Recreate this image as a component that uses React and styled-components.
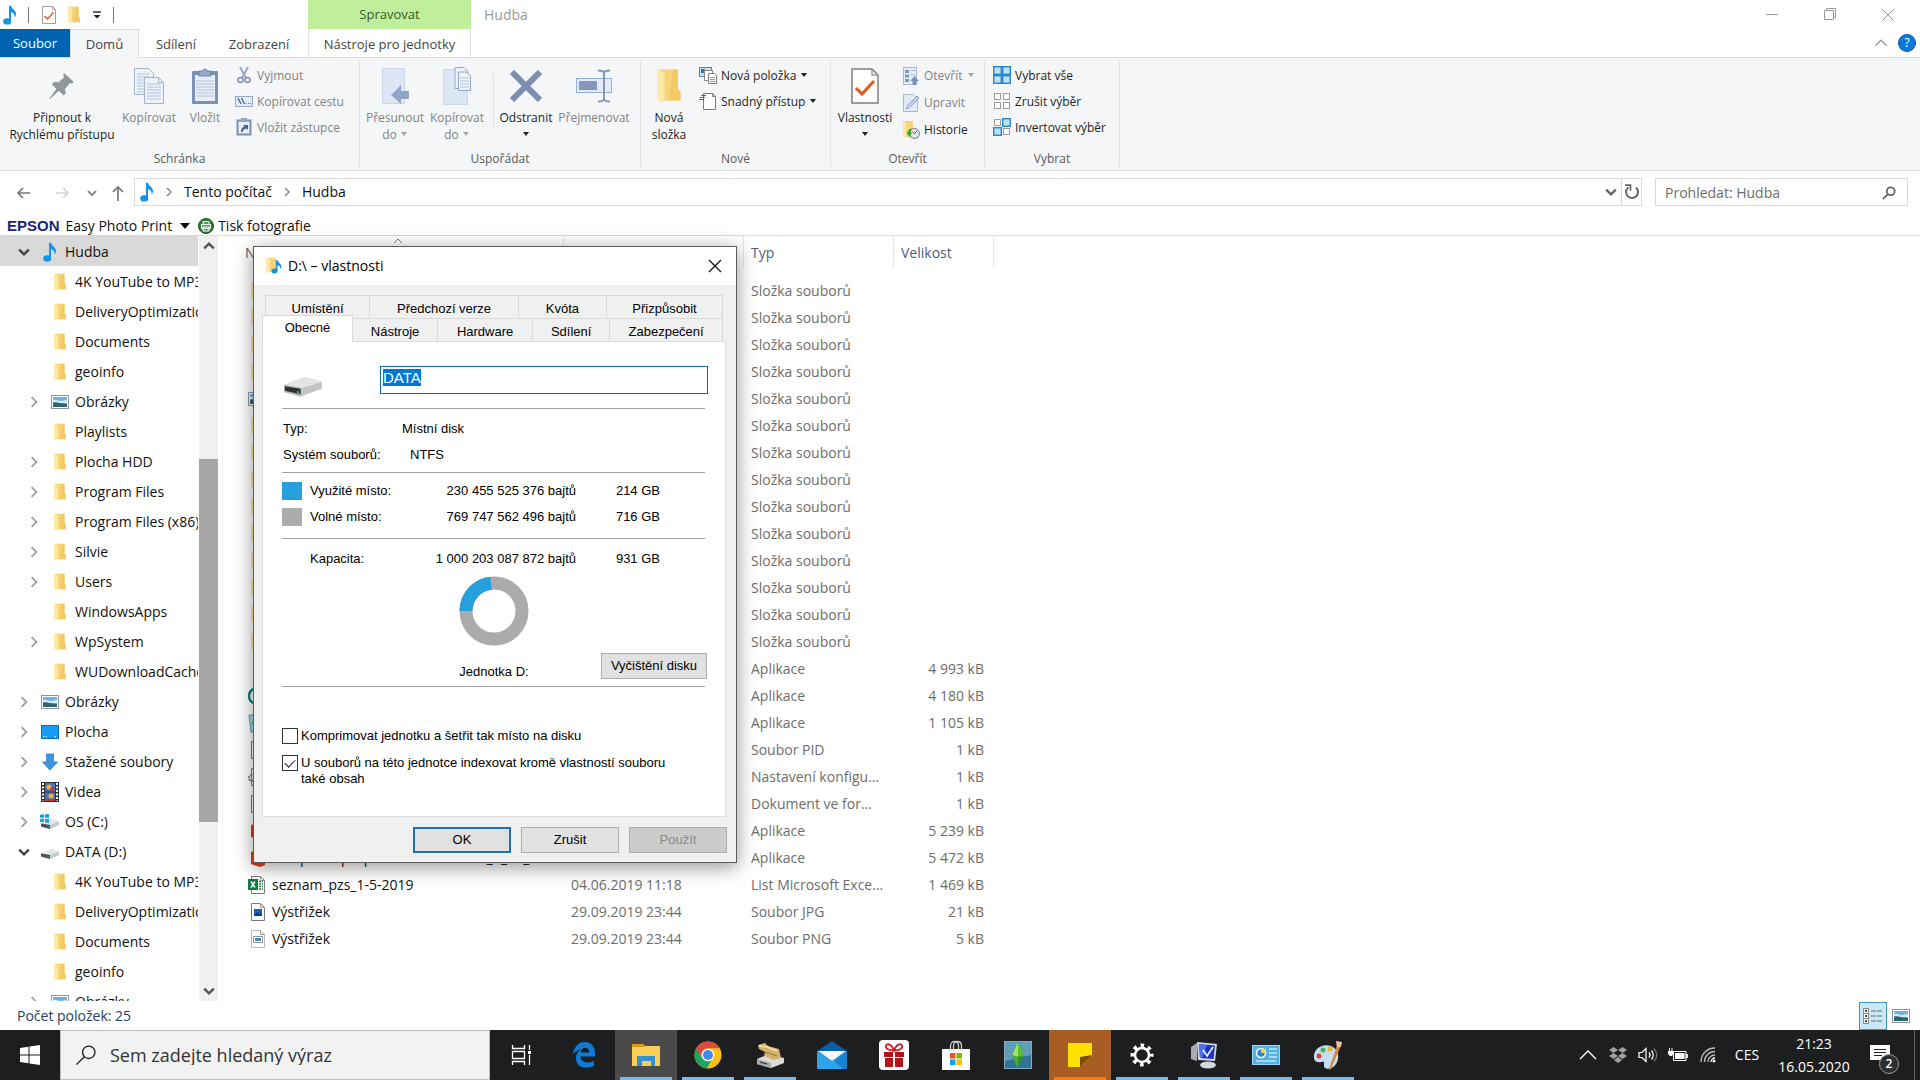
import React, { useEffect, useRef } from "react";
import styled, { createGlobalStyle, css } from "styled-components";

const Global = createGlobalStyle`
  * { box-sizing: border-box; }
  body { margin: 0; background: #fff; }
  button, input { font: inherit; color: inherit; margin: 0; }
  svg { display: block; flex: none; }
`;

const Screen = styled.div`
  height: 100vh;
  min-height: 640px;
  display: flex;
  flex-direction: column;
  overflow: hidden;
  position: relative;
  font-family: "Open Sans", "Noto Sans", sans-serif;
  font-size: 14px;
  line-height: 20px;
  color: #111;
`;

const bare = css`
  border: 0;
  background: none;
  padding: 0;
`;

/* ---------- icons ---------- */

const Svg = ({ w = 18, h = w, vb, children }) => (
  <svg width={w} height={h} viewBox={vb || `0 0 ${w} ${h}`} fill="none" aria-hidden="true">
    {children}
  </svg>
);

const Note = () => (
  <Svg w={14} h={20}>
    <ellipse cx="4.2" cy="16.4" rx="4" ry="3.2" fill="#1194ec" />
    <path d="M6 16V0.8h2c.4 3 5 4.400 5 8 0 1.500-.6 3-1.400 3.700.4-3-1.300-4.700-3.600-5.400V16z" fill="#1194ec" />
  </Svg>
);

const Folder = ({ w = 14, h = 18 }) => (
  <Svg w={w} h={h} vb="0 0 14 18">
    <path d="M1 .8h10.500v10l1.200.8v4.600H3z" fill="#f6d477" />
    <path d="M9 .8h2.500v10l1.200.8v4.600H7z" fill="#f2c962" />
    <path d="M1 .8l3.800 1.400v14.400l-1.200.8L1 15.800z" fill="#ffe9a6" />
  </Svg>
);

const Picture = () => (
  <Svg w={18} h={14}>
    <rect x=".5" y=".5" width="17" height="13" fill="#fff" stroke="#8f979d" />
    <rect x="2" y="2" width="14" height="10" fill="#6fb0e4" />
    <path d="M2 5c3-1 5 1 8 1s4-1 6-.5V8H2z" fill="#d9edf7" />
    <path d="M2 7.500c4-1 6 .8 14 1.500v3H2z" fill="#2f6473" />
  </Svg>
);

const Desktop = () => (
  <Svg w={18} h={14}>
    <rect x=".5" y=".5" width="17" height="13" fill="#149bf5" stroke="#0b6fb8" />
    <path d="M2 11.800h1.500M5 11.800h1M13.500 11.800H15" stroke="#fff" />
  </Svg>
);

const Download = () => (
  <Svg w={16} h={18}>
    <path d="M4.500 1h7v8H15.500L8 17 .5 9h4z" fill="#3c96e0" stroke="#2a7bc4" strokeWidth=".8" />
  </Svg>
);

const Film = () => (
  <Svg w={18} h={20}>
    <rect width="18" height="20" fill="#30323a" />
    <rect x="4" y="1" width="10" height="8.500" fill="#4b6fc2" />
    <rect x="4" y="10.500" width="10" height="8.500" fill="#4b6fc2" />
    <circle cx="8" cy="5" r="2.500" fill="#e8b92c" />
    <circle cx="11" cy="7" r="2" fill="#c83a2c" />
    <circle cx="10" cy="14" r="2.500" fill="#e8b92c" />
    <path d="M4 17h10v2H4z" fill="#c83a2c" />
    <path d="M2 1v18M16 1v18" stroke="#fff" strokeWidth="2" strokeDasharray="2 1.500" />
  </Svg>
);

const Drive = ({ os, w = 20, h = 16 }) => (
  <Svg w={w} h={h} vb="0 0 20 16">
    <path d="M1 9.500L12 5l7 2.500V11l-9 4-9-2.500z" fill="#c5c7c9" />
    <path d="M1 9.500L12 5l7 2.500L10 11z" fill="#e6e7e8" />
    <path d="M1 9.500l9 1.500v4l-9-2.500z" fill="#4b4e50" />
    <path d="M7.500 12.200l1.300.3v1l-1.300-.3z" fill="#3ad05a" />
    {os && <path d="M0 .8l4-.5v3.500H0zM5 .2L9 0v3.800H5zM0 4.800h4v3.500l-4-.5zM5 4.800h4V9l-4-.5z" fill="#15a6df" />}
  </Svg>
);

const BigDrive = () => (
  <Svg w={40} h={22}>
    <path d="M1 9L22 1l17 5v6.500L18 20.500 1 16z" fill="#c3c4c6" />
    <path d="M1 9L22 1l17 5-20 6z" fill="#e4e4e6" />
    <path d="M1 9l18 3-1 8.500L1 16z" fill="#b4b5b7" />
    <path d="M2 10.200l15.500 2.600v5.500L2 14.800z" fill="#2e3133" />
    <path d="M14 15l2 .4v2l-2-.4z" fill="#35d04c" />
  </Svg>
);

const Chevron = ({ dir = "right", size = 10, color = "#8a8a8a", sw = 2 }) => (
  <Svg w={size} h={size} vb="0 0 10 10">
    <path
      d={{ right: "M3 1l4 4-4 4", down: "M1 3l4 4 4-4", up: "M1 7l4-4 4 4" }[dir]}
      stroke={color}
      strokeWidth={sw}
    />
  </Svg>
);

const Caret = ({ color = "#222" }) => (
  <Svg w={8} h={5}>
    <path d="M1 0h6L4 4z" fill={color} />
  </Svg>
);

const CheckDoc = ({ w = 14, h = 18 }) => (
  <Svg w={w} h={h} vb="0 0 28 36">
    <path d="M1 1h20l6 6v28H1z" fill="#fff" stroke="#7f7f7f" strokeWidth="1.500" />
    <path d="M21 1v6h6" stroke="#9a9a9a" strokeWidth="1.500" />
    <path d="M5 20l6 6L23 13" stroke="#e35a1c" strokeWidth="3" />
  </Svg>
);

const Pin = () => (
  <Svg w={26} h={28}>
    <path d="M15 1l10 9-2.500 1.500-1.500-.5-5 6 .8 4-2 2.500-5-4.800L1 27l-.6-.6 7-9.700-4.400-4.200L5 10l4.500.3L15 5.500 14.200 3z" fill="#8e979c" />
  </Svg>
);

const docLines = (x, y, n, w) =>
  Array.from({ length: n }, (_, i) => <path key={i} d={`M${x} ${y + i * 3}h${w}`} stroke="#b3c2da" />);

const CopyBig = () => (
  <Svg w={30} h={36}>
    <path d="M.5.5h14l5 5v21H.5z" fill="#eef3fa" stroke="#a3b4cf" />
    {docLines(3, 6, 7, 12)}
    <path d="M10.500 9.500h14l5 5v21h-19z" fill="#eef3fa" stroke="#a3b4cf" />
    <path d="M24.500 9.500v5h5" stroke="#a3b4cf" />
    {docLines(13, 16, 6, 14)}
  </Svg>
);

const PasteBig = () => (
  <Svg w={28} h={38}>
    <rect x="1" y="4" width="26" height="33" rx="1" fill="#7d90b5" />
    <rect x="4" y="8" width="20" height="26" fill="#e8eef8" />
    {docLines(5, 14, 6, 18)}
    <path d="M8 4h4a2 2 0 014 0h4v5H8z" fill="#96a7c8" stroke="#6f83aa" />
  </Svg>
);

const Scissors = () => (
  <Svg>
    <path d="M5 1l6 11M13 1L7 12" stroke="#9aabc8" strokeWidth="2" />
    <circle cx="5.500" cy="14" r="2.500" stroke="#7d90b5" strokeWidth="1.600" />
    <circle cx="12.500" cy="14" r="2.500" stroke="#7d90b5" strokeWidth="1.600" />
  </Svg>
);

const PathIcon = () => (
  <Svg>
    <rect x=".5" y="4.500" width="17" height="10" fill="#e3ebf7" stroke="#9aabc8" />
    <path d="M3 6l3 6M6.500 6l3 6" stroke="#4d628e" strokeWidth="1.300" />
    <path d="M10.500 11.500h1M13 11.500h1M15.200 11.500h1" stroke="#4d628e" />
  </Svg>
);

const ShortcutIcon = () => (
  <Svg>
    <path d="M2.500 2.500h13v14h-13z" fill="#e8eef8" stroke="#7d90b5" strokeWidth="2" />
    <path d="M6 0h6v4H6z" fill="#96a7c8" />
    <path d="M6 14c0-4 2-5 3.500-5.500L8 7h5v5l-1.500-1.500C9 11 8 12 7.500 14z" fill="#4d628e" />
  </Svg>
);

const MoveBig = () => (
  <Svg w={32} h={36}>
    <path d="M3.500.5h22v35h-22z" fill="#dce6f4" stroke="#c9d7eb" />
    <path d="M30 23v8h-8v5l-10-9 10-10v6z" fill="#93a5c6" />
  </Svg>
);

const CopyToBig = () => (
  <Svg w={34} h={38}>
    <path d="M3.500 2.500h24v35h-24z" fill="#dce6f4" stroke="#c9d7eb" />
    <path d="M15 .5h9l4 4v17H15z" fill="#eef3fa" stroke="#94a6c6" />
    <path d="M18.500 5h8l4 4v14.500h-12z" fill="#eef3fa" stroke="#94a6c6" />
    {docLines(20, 11, 4, 9)}
  </Svg>
);

const DeleteBig = () => (
  <Svg w={32} h={32}>
    <path d="M2 2l28 28M30 2L2 30" stroke="#7d8fb0" strokeWidth="6" />
  </Svg>
);

const RenameBig = () => (
  <Svg w={36} h={34}>
    <rect x=".5" y="9.500" width="35" height="14" fill="#e3ebf7" stroke="#8fb0dc" />
    <rect x="3" y="12" width="18" height="9" fill="#8497bb" />
    <path d="M22 1.500c3 0 5 .5 6 2 1-1.500 3-2 6-2M28 3v28M22 32.500c3 0 5-.5 6-2 1 1.500 3 2 6 2" stroke="#8497bb" strokeWidth="2" />
  </Svg>
);

const NewItem = () => (
  <Svg>
    <rect x=".5" y="1.500" width="12" height="9" fill="#c7e2f2" stroke="#4a87ad" />
    <rect x="2" y="3" width="4" height="4" fill="#35789c" />
    <rect x="5.500" y="4.500" width="8" height="10" fill="#fff" stroke="#8a8a8a" />
    <path d="M9.500 7.500h6l2 2v8h-8z" fill="#fff" stroke="#7c7c7c" />
    <path d="M11 11.500h5M11 13.500h5M11 15.500h5" stroke="#a58ec0" />
  </Svg>
);

const EasyAccess = () => (
  <Svg>
    <path d="M4.500 1.500h9l3 3v13h-12z" fill="#fff" stroke="#7c7c7c" />
    <path d="M13.500 1.500v3h3" stroke="#7c7c7c" />
    <path d="M2 3.500h5M1 5.500h5M0 7.500h5" stroke="#1e7aa8" />
  </Svg>
);

const OpenIcon = () => (
  <Svg>
    <rect x="1.500" y=".5" width="13" height="17" fill="#e8eef8" stroke="#a9b9d4" />
    <path d="M3 3h4v3H3zM3 7.500h4v3H3zM3 12h4v3H3z" fill="#8497bb" />
    <path d="M8.500 3.500h5M8.500 8h5" stroke="#a9b9d4" />
    <path d="M12.500 9l4.500 5h-2.500v4h-4v-4H8z" fill="#7d90b5" />
  </Svg>
);

const EditIcon = () => (
  <Svg>
    <path d="M1.500.5h10l4 4v13h-14z" fill="#e3ebf7" stroke="#a9b9d4" />
    <path d="M4 15l1.500-3.500L15 2l2 2-9.500 9.500z" fill="#c2d2ea" stroke="#8fa3c6" />
  </Svg>
);

const HistoryIcon = () => (
  <Svg>
    <path d="M1 0h10v16H3z" fill="#f6d477" />
    <path d="M1 0l3 1v16l-3-1z" fill="#ffe9a6" />
    <circle cx="12.500" cy="12.500" r="5" fill="#dfe3e0" stroke="#777" />
    <path d="M12.500 12.500l2.500-2.500M10.500 11l2 1.500" stroke="#555" />
    <path d="M10 7.500c-3 0-4 2-4 4H4.500L7.500 16l2.500-4.500H8.500c0-1.500.5-3 1.500-4z" fill="#2fa53a" />
  </Svg>
);

const squares = [[1, 1], [10, 1], [1, 10], [10, 10]];
const GridIcon = ({ on }) => (
  <Svg>
    {squares.map(([x, y], i) =>
      on[i] ? (
        <rect key={i} x={x - 0.3} y={y - 0.3} width="7.600" height="7.600" fill="#b9e1f8" stroke="#2a86cc" strokeWidth="1.400" />
      ) : (
        <rect key={i} x={x + 0.5} y={y + 0.5} width="6" height="6" fill="#fff" stroke="#9d9d9d" />
      )
    )}
  </Svg>
);

const Arrow = ({ dir, color = "#777" }) => (
  <Svg w={18} h={18}>
    <path d={{ left: "M15 9H3M8 4L3 9l5 5", right: "M3 9h12M10 4l5 5-5 5", up: "M9 17V3M4 8l5-5 5 5" }[dir]} stroke={color} strokeWidth="1.700" />
  </Svg>
);

const Refresh = () => (
  <Svg w={16} h={16}>
    <path d="M4.500 3.200A6 6 0 1012 3.500" stroke="#666" strokeWidth="2" />
    <path d="M1 1.200h5.500v5.500" stroke="#666" strokeWidth="1.700" />
  </Svg>
);

const Magnifier = ({ w = 16, color = "#666", sw = 2 }) => (
  <Svg w={w} h={w} vb="0 0 16 16">
    <circle cx="10" cy="6" r="4.500" stroke={color} strokeWidth={sw} />
    <path d="M6.800 9.200L1 15" stroke={color} strokeWidth={sw} />
  </Svg>
);

const PrintBadge = () => (
  <Svg w={16} h={16}>
    <circle cx="8" cy="8" r="7.500" fill="#2c7d33" stroke="#1b5521" />
    <path d="M5 3.500h6v3H5zM3.500 6.500h9v4h-9zM5 9h6v4H5z" fill="#49a450" stroke="#fff" />
  </Svg>
);

const Sheet = ({ kind }) => (
  <Svg w={18} h={20}>
    <path d="M3.500 1.500h9l4 4v13h-13z" fill="#fff" stroke={kind === "png" ? "#b9b9b9" : "#7b7b7b"} />
    <path d="M12.500 1.500v4h4" stroke="#9a9a9a" />
    {kind === "jpg" && <path d="M6 7h8v7H6z" fill="#1d62b4" />}
    {kind === "jpg" && <path d="M6 14l3-4 2 2 1.500-1L14 14z" fill="#0d3a78" />}
    {kind === "png" && <rect x="5.500" y="7.500" width="9" height="6" fill="#fff" stroke="#8f979d" />}
    {kind === "png" && <path d="M7 9h6v3H7z" fill="#4e86a8" />}
    {kind === "xls" && <path d="M11 6.500h4M11 9h4M11 11.500h4M11 14h4" stroke="#24834b" strokeWidth="1.500" strokeDasharray="2 .8" />}
    {kind === "xls" && <rect y="4" width="10" height="11" fill="#167a42" />}
    {kind === "xls" && <path d="M3 6.500l4 6M7 6.500l-4 6" stroke="#fff" strokeWidth="1.500" />}
    {kind === "ini" && <circle cx="4" cy="11" r="3" stroke="#6d7780" strokeWidth="2" strokeDasharray="2 1" />}
  </Svg>
);

const AppIcon = ({ kind }) => (
  <Svg w={18} h={20}>
    {kind === "ring" && <circle cx="9" cy="10" r="8" stroke="#128080" strokeWidth="2.500" />}
    {kind === "bin" && <path d="M1 2h16l-2 17H3z" fill="#a9d4ee" stroke="#5a9cc4" />}
    {kind === "bin" && <path d="M4 9l5-2 3 6-6 4z" fill="#2aa43a" />}
    {kind === "office" && <path d="M3 4l9-3 5 2v14l-5 2-9-3z" fill="#d8401c" />}
    {kind === "plain" && <path d="M8 4l2 12-4 2 2-6-2-2z" fill="#777" />}
  </Svg>
);

const FolderMusic = () => (
  <Svg w={18} h={18}>
    <path d="M1 1h10v14H3z" fill="#f6d477" />
    <path d="M1 1l4 1.500v14L1 15z" fill="#ffe9a6" />
    <ellipse cx="9.500" cy="14" rx="3" ry="2.500" fill="#1b8ddd" />
    <path d="M10.800 14V3h1.500c.5 3 4.200 3.500 4.200 7l-1 2c0-2.500-1.500-3.500-3-4v6z" fill="#1b8ddd" />
  </Svg>
);

/* ---------- title bar and tabs ---------- */

const TitleBar = styled.header`
  display: flex;
  height: 29px;
  flex: none;
`;
const QuickAccess = styled.div`
  width: 308px;
  display: flex;
  align-items: center;
  gap: 11px;
  padding-left: 3px;
`;
const QuickButton = styled.button`
  ${bare}
`;
const QuickSep = styled.span`
  width: 1px;
  height: 16px;
  margin-right: 2px;
  background: #777;
`;
const ContextTitle = styled.div`
  width: 163px;
  background: #bfef9b;
  color: #3c5a2a;
  text-align: center;
  font-size: 13px;
  line-height: 28px;
`;
const WindowTitle = styled.h1`
  flex: 1;
  margin: 0;
  padding-left: 13px;
  font-size: 14px;
  font-weight: 400;
  line-height: 29px;
  color: #9a9a9a;
`;
const Controls = styled.div`
  display: flex;
  padding-right: 3px;
`;
const Control = styled.button`
  ${bare}
  width: 58px;
  display: grid;
  place-items: center;
`;

const TabRow = styled.nav`
  display: flex;
  height: 29px;
  flex: none;
  border-bottom: 1px solid #dadbdc;
`;
const Tab = styled.button`
  ${bare}
  height: 29px;
  width: ${(p) => p.$w}px;
  font-size: 13px;
  color: #444;
  ${(p) => p.$kind === "file" && css`background: #0063b1; color: #fff; height: 28px;`}
  ${(p) => p.$kind === "active" && css`background: #f5f6f7; border: 1px solid #dadbdc; border-bottom: 0;`}
  ${(p) => p.$kind === "context" && css`margin-left: 3px; border: 1px solid #e2e2e2; border-width: 0 1px;`}
`;
const TabTail = styled.div`
  flex: 1;
  display: flex;
  justify-content: flex-end;
  align-items: center;
  gap: 10px;
  padding-right: 4px;
`;
const Help = styled.button`
  ${bare}
  width: 18px;
  height: 18px;
  border-radius: 50%;
  background: #0a78d6;
  border: 1px solid #0a5ca8;
  color: #fff;
  font-size: 12px;
  line-height: 16px;
`;

/* ---------- ribbon ---------- */

const Ribbon = styled.div`
  display: flex;
  height: 113px;
  flex: none;
  padding: 2px 0 3px;
  background: #f5f6f7;
  border-bottom: 1px solid #dadbdc;
  font-size: 12px;
  line-height: 17px;
`;
const Group = styled.section`
  width: ${(p) => p.$w}px;
  border-right: 1px solid #e2e3e4;
  display: flex;
  flex-direction: column;
`;
const GroupBody = styled.div`
  flex: 1;
  display: flex;
  padding-left: ${(p) => p.$pad || 4}px;
`;
const GroupLabel = styled.div`
  text-align: center;
  color: #5a5a5a;
  line-height: 16px;
`;
const Big = styled.button`
  ${bare}
  width: ${(p) => p.$w}px;
  display: flex;
  flex-direction: column;
  align-items: center;
  padding-top: 7px;
  white-space: nowrap;
  color: ${(p) => (p.disabled ? "#838383" : "#1e1e1e")};
`;
const BigIcon = styled.span`
  height: 42px;
  display: grid;
  place-items: center;
  padding-bottom: 4px;
`;
const Line = styled.span`
  display: flex;
  align-items: center;
  gap: 3px;
  height: 17px;
`;
const SmallList = styled.div`
  display: flex;
  flex-direction: column;
  align-items: flex-start;
  padding: 2px 0 0 ${(p) => p.$pad}px;
`;
const Small = styled.button`
  ${bare}
  height: ${(p) => p.$h || 26}px;
  display: flex;
  align-items: center;
  gap: 4px;
  white-space: nowrap;
  color: ${(p) => (p.disabled ? "#838383" : "#1e1e1e")};
`;
const InnerSep = styled.span`
  width: 1px;
  height: 56px;
  margin: 14px 2px 0 5px;
  background: #e2e3e4;
`;

const BigButton = ({ w, icon, lines, caret, disabled }) => (
  <Big $w={w} disabled={disabled}>
    <BigIcon>{icon}</BigIcon>
    {lines.map((t, i) => (
      <Line key={i}>
        {t}
        {caret && i === lines.length - 1 && <Caret color={disabled ? "#a5a5a5" : "#222"} />}
      </Line>
    ))}
  </Big>
);
const SmallButton = ({ icon, text, caret, disabled, h }) => (
  <Small disabled={disabled} $h={h}>
    {icon}
    {text}
    {caret && <Caret color={disabled ? "#a5a5a5" : "#222"} />}
  </Small>
);

/* ---------- address and Epson bars ---------- */

const AddressRow = styled.div`
  display: flex;
  flex: none;
  padding: 7px 12px 0 0;
`;
const NavButtons = styled.div`
  width: 134px;
  display: flex;
  align-items: center;
  padding: 2px 0 0 15px;
`;
const NavButton = styled.button`
  ${bare}
  width: ${(p) => p.$w}px;
`;
const AddressBox = styled.div`
  flex: 1;
  height: 28px;
  display: flex;
  align-items: center;
  gap: 10px;
  border: 1px solid #d9d9d9;
  padding-left: 5px;
`;
const Crumb = styled.a`
  color: inherit;
  text-decoration: none;
`;
const AddressTail = styled.div`
  margin-left: auto;
  display: flex;
  align-items: center;
  align-self: stretch;
`;
const AddressButton = styled.button`
  ${bare}
  width: 20px;
  height: 26px;
  display: grid;
  place-items: center;
  border-left: ${(p) => (p.$line ? "1px solid #d9d9d9" : "0")};
`;
const SearchBox = styled.label`
  width: 253px;
  height: 28px;
  margin-left: 13px;
  padding: 1px 11px 0 9px;
  display: flex;
  align-items: center;
  border: 1px solid #d9d9d9;
`;
const SearchInput = styled.input`
  ${bare}
  flex: 1;
  min-width: 0;
  outline: 0;
  &::placeholder { color: ${(p) => p.$ink || "#6d6d6d"}; opacity: 1; }
`;
const EpsonBar = styled.div`
  display: flex;
  align-items: center;
  height: 30px;
  flex: none;
  padding: 11px 0 0 7px;
  border-bottom: 1px solid #dadada;
`;
const EpsonMark = styled.b`
  font-family: "Liberation Sans", Arial, sans-serif;
  font-size: 15px;
  color: #1a237e;
  margin-right: 6px;
`;
const BarButton = styled.button`
  ${bare}
  display: flex;
  align-items: center;
  gap: ${(p) => p.$gap}px;
  margin-right: 8px;
`;

/* ---------- panes ---------- */

const Panes = styled.main`
  flex: 1;
  min-height: 0;
  display: flex;
`;
const TreeList = styled.ul`
  width: 198px;
  margin: 0;
  padding: 0;
  list-style: none;
  overflow: hidden;
`;
const TreeItem = styled.li`
  height: 30px;
  display: flex;
  align-items: center;
  padding: 1px 0 0 ${(p) => 18 + p.$level * 10}px;
  background: ${(p) => (p.$selected ? "#d9d9d9" : "transparent")};
  white-space: nowrap;
`;
const Slot = styled.span`
  width: ${(p) => p.$w}px;
  height: 20px;
  flex: none;
  display: flex;
  align-items: center;
  justify-content: ${(p) => p.$justify || "flex-start"};
`;
const ScrollBar = styled.div`
  width: 20px;
  margin-left: 1px;
  background: #f0f0f0;
  display: flex;
  flex-direction: column;
  border-right: 1px solid #fff;
`;
const ScrollButton = styled.button`
  ${bare}
  height: 20px;
  flex: none;
  display: grid;
  place-items: center;
`;
const Track = styled.div`
  flex: 1;
  display: flex;
  flex-direction: column;
`;
const Thumb = styled.div`
  flex: 0 0 50%;
  background: #a6a6a6;
`;
const TrackGap = styled.div`
  flex: 0 0 28%;
`;
const FilePane = styled.div`
  flex: 1;
  min-width: 0;
  margin-left: 3px;
  border-left: 1px solid #f3f3f3;
  overflow: hidden;
`;
const Files = styled.table`
  table-layout: fixed;
  width: 771px;
  border-collapse: collapse;
  color: #6d6d6d;
`;
const Th = styled.th`
  height: 41px;
  padding: 0;
  vertical-align: top;
  text-align: left;
  font-weight: 400;
  width: ${(p) => p.$w}px;
`;
const HeadCell = styled.div`
  position: relative;
  height: 32px;
  border-right: 1px solid #e5e5e5;
  padding-left: ${(p) => p.$pad || 7}px;
  line-height: 34px;
  color: #4c607a;
`;
const SortMark = styled.span`
  position: absolute;
  top: 0;
  left: 50%;
`;
const Td = styled.td`
  height: 27px;
  padding: 0 10px 0 7px;
  white-space: nowrap;
  overflow: hidden;
  text-overflow: ellipsis;
  text-align: ${(p) => (p.$right ? "right" : "left")};
`;
const NameCell = styled.div`
  display: flex;
  align-items: center;
  gap: 6px;
  padding-left: 18px;
  color: #111;
`;
const StatusBar = styled.footer`
  height: 29px;
  flex: none;
  display: flex;
  justify-content: space-between;
  padding: 0 10px 0 17px;
  line-height: 30px;
  color: #26405f;
`;
const Views = styled.div`
  display: flex;
  align-items: center;
  gap: 5px;
`;
const ViewButton = styled.button`
  ${bare}
  height: 28px;
  display: grid;
  place-items: center;
  ${(p) => p.$on && css`width: 28px; background: #cbe8f6; border: 1px solid #3c97bd;`}
`;

/* ---------- properties dialog ---------- */

const Dialog = styled.form`
  position: absolute;
  left: 253px;
  top: 246px;
  width: 484px;
  border: 1px solid #5c5c5c;
  background: #f0f0f0;
  box-shadow: 0 4px 18px rgba(0, 0, 0, 0.42);
  font-family: "Liberation Sans", Arial, sans-serif;
  font-size: 13px;
  line-height: 16px;
  color: #000;
`;
const DialogTitle = styled.div`
  height: 38px;
  background: #fff;
  display: flex;
  align-items: center;
  gap: 5px;
  padding: 0 14px 1px 11px;
  font-family: "Open Sans", "Noto Sans", sans-serif;
  font-size: 14px;
`;
const DialogClose = styled.button`
  ${bare}
  margin-left: auto;
`;
const DialogTabs = styled.div`
  padding: ${(p) => (p.$back ? "10px 13px 0 11px" : "0 13px 0 8px")};
  height: ${(p) => (p.$back ? 33 : 23)}px;
  display: flex;
  align-items: flex-end;
`;
const DialogTab = styled.button`
  ${bare}
  flex: ${(p) => p.$w} 1 0;
  height: 23px;
  padding-top: 3px;
  border: 1px solid #d9d9d9;
  border-width: 1px 1px 0 0;
  &:first-child { border-left-width: 1px; }
  ${(p) => p.$on && css`
    height: 27px;
    padding: 0 0 2px;
    margin-bottom: -1px;
    background: #fff;
    position: relative;
  `}
`;
const Panel = styled.div`
  margin: 0 10px 0 8px;
  height: 476px;
  padding: 24px 17px 0 19px;
  border: 1px solid #dcdcdc;
  background: #fff;
`;
const Rule = styled.hr`
  margin: 0 3px 0 0;
  border: 0;
  height: 1px;
  background: #a0a0a0;
`;
const VolumeRow = styled.div`
  display: flex;
  justify-content: space-between;
  align-items: flex-start;
  height: 42px;
`;
const DriveBox = styled.span`
  padding: 10px 0 0 1px;
`;
const VolumeInput = styled.input`
  width: 328px;
  height: 28px;
  padding: 0 2px 6px;
  border: 1px solid #0f6ab4;
  outline: 0;
  background: #fff;
  font-size: 15px;
  &::selection { background: #0078d7; color: #fff; }
`;
const Facts = styled.dl`
  margin: 0;
  padding: ${(p) => p.$pad};
  display: flex;
  flex-direction: column;
  gap: 10px;
`;
const Fact = styled.div`
  display: flex;
  align-items: center;
  height: 16px;
`;
const Term = styled.dt`
  width: ${(p) => p.$w}px;
`;
const Value = styled.dd`
  margin: 0;
  width: ${(p) => (p.$w ? p.$w + "px" : "auto")};
  text-align: ${(p) => (p.$right ? "right" : "left")};
`;
const Swatch = styled.span`
  width: 20px;
  height: 18px;
  margin-right: 8px;
  background: ${(p) => p.$c};
`;
const ChartArea = styled.div`
  display: grid;
  grid-template-columns: 158px 108px 1fr;
  height: 119px;
  padding: 9px 1px 0 0;
`;
const Donut = styled.figure`
  grid-column: 2;
  margin: 0;
  display: flex;
  flex-direction: column;
  align-items: center;
  gap: 18px;
`;
const PushButton = styled.button`
  width: ${(p) => p.$w}px;
  height: 26px;
  padding: 0;
  border: ${(p) => (p.$primary ? "2px solid #1a6fb5" : "1px solid #adadad")};
  background: ${(p) => (p.disabled ? "#cccccc" : "#e1e1e1")};
  color: ${(p) => (p.disabled ? "#8b8b8b" : "#000")};
`;
const CleanUp = styled.div`
  display: flex;
  justify-content: flex-end;
  align-items: flex-end;
  padding-bottom: 7px;
`;
const Options = styled.div`
  display: flex;
  flex-direction: column;
  gap: 11px;
  padding-top: 41px;
`;
const Option = styled.label`
  display: flex;
  gap: 3px;
`;
const Tick = styled.input`
  appearance: none;
  flex: none;
  width: 16px;
  height: 16px;
  border: 1px solid #333;
  background: #fff;
  display: grid;
  place-items: center;
  &:checked::after {
    content: "";
    width: 9px;
    height: 5px;
    border: solid #222;
    border-width: 0 0 1px 1px;
    transform: rotate(-45deg);
    margin-bottom: 3px;
  }
`;
const DialogFooter = styled.div`
  display: flex;
  justify-content: flex-end;
  gap: 10px;
  padding: 10px 9px 9px 0;
`;

/* ---------- taskbar ---------- */

const TaskBar = styled.div`
  height: 50px;
  flex: none;
  display: flex;
  background: #1d1e20;
  color: #fff;
`;
const Start = styled.button`
  ${bare}
  width: 60px;
  display: grid;
  place-items: center;
`;
const TaskSearch = styled.label`
  width: 430px;
  display: flex;
  align-items: center;
  gap: 13px;
  padding-left: 14px;
  background: #f2f2f2;
  border: 1px solid #bdbdbd;
  color: #222;
  font-size: 18px;
`;
const Tasks = styled.div`
  display: flex;
  padding-left: 1px;
`;
const Task = styled.button`
  ${bare}
  width: 62px;
  display: grid;
  place-items: center;
  border: solid transparent;
  border-width: 0 5px;
  background: ${(p) => p.$bg || "transparent"};
  box-shadow: ${(p) => (p.$line ? `inset 0 -3px ${p.$line}` : "none")};
`;
const Tray = styled.div`
  margin-left: auto;
  display: flex;
  align-items: center;
`;
const TrayButton = styled.button`
  ${bare}
  width: 30px;
  display: grid;
  place-items: center;
`;
const Language = styled.button`
  ${bare}
  width: 48px;
  font-size: 14px;
`;
const Clock = styled.div`
  width: 86px;
  text-align: center;
  font-size: 14px;
  line-height: 23px;
`;
const Notices = styled.button`
  ${bare}
  position: relative;
  width: 58px;
  height: 50px;
  display: grid;
  place-items: center;
  padding-right: 12px;
  border-right: 1px solid #666;
  margin-right: 5px;
`;
const Count = styled.span`
  position: absolute;
  right: 15px;
  bottom: 6px;
  width: 20px;
  height: 20px;
  border-radius: 50%;
  border: 1px solid #999;
  background: #2c2e30;
  font-size: 12px;
  font-weight: 600;
  line-height: 18px;
`;

const taskIcons = {
  view: (
    <Svg w={22} h={20}>
      <path d="M1.500 0v3.500h12V0M1.500 20v-3.500h12V20M1.500 6.500h12v7h-12zM18.500 0v5M18.500 10v10" stroke="#fff" strokeWidth="1.300" />
      <path d="M17 6h3v3h-3z" fill="#fff" />
    </Svg>
  ),
  edge: (
    <Svg w={24} h={26}>
      <path d="M1 12C2 4.500 7 0 12.500 0 19 0 23 4.500 23 11v3.500H8.500c.3 4 3.500 6 7.200 6 2.300 0 4.500-.6 6.300-1.700v5c-2 1.200-4.700 2-7.500 2C8 25.800 4 22 4 16.500 4 12.500 6 9 9.500 7.500 6 8 3 9.500 1 12zm7.700-1.500h8.500c0-3-1.500-4.700-4-4.700-2.300 0-4 1.700-4.500 4.700z" fill="#0c7cd8" />
    </Svg>
  ),
  explorer: (
    <Svg w={28} h={24}>
      <path d="M0 1h11l2 2h15v20H0z" fill="#f7ce57" />
      <path d="M0 1h11l2 3H0z" fill="#dd9b12" />
      <path d="M5 23V13h18v10h-4v-5h-9v5z" fill="#3590d4" />
    </Svg>
  ),
  chrome: (
    <Svg w={28} h={28}>
      <circle cx="14" cy="14" r="13.500" fill="#fbc116" />
      <path d="M14 14l-5.800 3.400L2.300 7.300a13.500 13.500 0 0010.500 20.100L18.500 17z" fill="#1da362" />
      <path d="M2.300 7.300A13.500 13.500 0 0125.700 7.300H14a6.700 6.700 0 00-6.200 9.200z" fill="#dd4b3e" />
      <circle cx="14" cy="14" r="6.300" fill="#fff" />
      <circle cx="14" cy="14" r="5" fill="#4788f0" />
    </Svg>
  ),
  scanner: (
    <Svg w={28} h={26}>
      <path d="M1 17l12-5 15 4v5l-13 5-14-4z" fill="#d9dcda" />
      <path d="M1 17l14 4v5L1 22z" fill="#a6aaa9" />
      <path d="M4 19.500l7 2v1l-7-2z" fill="#222" />
      <path d="M2 3l7-2 3 3 11 3 2 9-7 2-10-4 1-4-6-3z" fill="#d3b06c" />
      <path d="M3 4l8 1 10 4" stroke="#f5e3ae" strokeWidth="1.500" />
      <path d="M9 10l12 4" stroke="#9c7a3c" />
    </Svg>
  ),
  mail: (
    <Svg w={30} h={28}>
      <path d="M0 10L15 0l15 10v18H0z" fill="#0b5ca8" />
      <path d="M0 10l15 10L30 10v18H0z" fill="#2ba4ea" />
      <path d="M17 20L30 10v18h-4z" fill="#1783d2" />
      <path d="M1 10h28L15 20z" fill="#f2f6fa" />
    </Svg>
  ),
  gift: (
    <Svg w={30} h={30}>
      <rect width="30" height="30" rx="4" fill="#fff" />
      <path d="M5 12h9v5H5zM16 12h9v5h-9zM6 18h8v9H6zM16 18h8v9h-8z" fill="#b3131b" />
      <path d="M15 10.500C9 10.500 6 8 7 5.500s6-1.500 8 5c2-6.500 7-7.500 8-5s-2 5-8 5z" stroke="#d2202a" strokeWidth="1.800" />
    </Svg>
  ),
  store: (
    <Svg w={28} h={30}>
      <path d="M0 9h28v21H0z" fill="#fff" />
      <path d="M8.500 11V6c0-6 8-6 8 0v3M11.500 11V6c0-6 8-6 8 0v5" stroke="#c8c8c8" strokeWidth="1.300" />
      <path d="M8 13h5.500v5.500H8z" fill="#f25022" />
      <path d="M14.500 13H20v5.500h-5.500z" fill="#7fba00" />
      <path d="M8 19.500h5.500V25H8z" fill="#00a4ef" />
      <path d="M14.500 19.500H20V25h-5.500z" fill="#ffb900" />
    </Svg>
  ),
  sims: (
    <Svg w={28} h={28}>
      <rect x=".5" y=".5" width="27" height="27" fill="#5f9db8" stroke="#86aabb" />
      <path d="M1 20l26-6v13H1z" fill="#2f7397" />
      <path d="M14 1l6 13-6 13-6-13z" fill="#2f8f2f" />
      <path d="M14 1v15l-6-2z" fill="#a4e36a" />
      <path d="M14 27V16l-6-2z" fill="#4cae35" />
      <path d="M14 1v15l6-2z" fill="#5cc03c" />
    </Svg>
  ),
  sticky: (
    <Svg w={24} h={24}>
      <path d="M0 0h24v12L12 24H0z" fill="#ffe100" />
      <path d="M12 24V14l12-2z" fill="#7b4b05" />
    </Svg>
  ),
  gear: (
    <Svg w={24} h={24}>
      <circle cx="12" cy="12" r="7" stroke="#fff" strokeWidth="2.500" />
      <circle cx="12" cy="12" r="9.500" stroke="#fff" strokeWidth="4" strokeDasharray="3.460 4" strokeDashoffset="1.700" />
    </Svg>
  ),
  display: (
    <Svg w={28} h={28}>
      <path d="M1 6l6-4v18l-6-2z" fill="#a7adb5" />
      <path d="M7 1l20 2-2 17-17-1z" fill="#d5d9df" />
      <path d="M9 3l16 1.500-1.500 13.500L10 17z" fill="#1c35c0" />
      <path d="M9 3l8 1-5 13h-2z" fill="#4f74e4" />
      <path d="M13 9l4 6 6-9" stroke="#e5efff" strokeWidth="1.800" />
      <ellipse cx="18" cy="24" rx="8" ry="3.500" fill="#d5d8dd" />
    </Svg>
  ),
  panel: (
    <Svg w={28} h={20}>
      <rect x=".5" y=".5" width="27" height="19" fill="#52b2e6" stroke="#9bd6f4" />
      <circle cx="9" cy="8" r="4.500" stroke="#fff" strokeWidth="1.500" fill="#2c86c3" />
      <path d="M9 8V3.500A4.500 4.500 0 0113.500 8z" fill="#ffc94a" />
      <path d="M17 4h8M17 8h8M17 12h8M4 16h20" stroke="#fff" />
    </Svg>
  ),
  paint: (
    <Svg w={30} h={30}>
      <path d="M1 18C0 8 10 3 18 6s9 12 5 18-12 6-12 2 1-5-3-4-7-1-7-4z" fill="#c5dff0" />
      <circle cx="6" cy="16" r="2.500" fill="#d9412f" />
      <circle cx="10" cy="10" r="2.500" fill="#4caf50" />
      <circle cx="17" cy="9" r="2.500" fill="#f0b42c" />
      <path d="M24 6l3 2-9 21-2 1 1-4z" fill="#d78a36" />
      <path d="M23 1l6 1-1 5-4 1z" fill="#e8c79c" />
    </Svg>
  ),
};

/* ---------- data ---------- */

const driveFolders = ["4K YouTube to MP3", "DeliveryOptimization", "Documents", "geoinfo"];
const tree = [
  { name: "Hudba", level: 0, icon: <Note />, open: true, selected: true },
  ...driveFolders.map((name) => ({ name, level: 1 })),
  { name: "Obrázky", level: 1, icon: <Picture />, more: true },
  { name: "Playlists", level: 1 },
  { name: "Plocha HDD", level: 1, more: true },
  { name: "Program Files", level: 1, more: true },
  { name: "Program Files (x86)", level: 1, more: true },
  { name: "Silvie", level: 1, more: true },
  { name: "Users", level: 1, more: true },
  { name: "WindowsApps", level: 1 },
  { name: "WpSystem", level: 1, more: true },
  { name: "WUDownloadCache", level: 1 },
  { name: "Obrázky", level: 0, icon: <Picture />, more: true },
  { name: "Plocha", level: 0, icon: <Desktop />, more: true },
  { name: "Stažené soubory", level: 0, icon: <Download />, more: true },
  { name: "Videa", level: 0, icon: <Film />, more: true },
  { name: "OS (C:)", level: 0, icon: <Drive os />, more: true },
  { name: "DATA (D:)", level: 0, icon: <Drive />, open: true },
  ...driveFolders.map((name) => ({ name, level: 1 })),
  { name: "Obrázky", level: 1, icon: <Picture />, more: true },
];

const F = "Složka souborů";
const files = [
  ...Array.from({ length: 14 }, (_, i) => ({ icon: i === 4 ? <Picture /> : <Slot $w={18} $justify="center"><Folder /></Slot>, type: F })),
  { icon: <AppIcon kind="plain" />, type: "Aplikace", size: "4 993 kB" },
  { icon: <AppIcon kind="ring" />, type: "Aplikace", size: "4 180 kB" },
  { icon: <AppIcon kind="bin" />, type: "Aplikace", size: "1 105 kB" },
  { icon: <Sheet />, type: "Soubor PID", size: "1 kB" },
  { icon: <Sheet kind="ini" />, type: "Nastavení konfigurace", size: "1 kB" },
  { icon: <Sheet />, type: "Dokument ve formátu", size: "1 kB" },
  { icon: <AppIcon kind="office" />, type: "Aplikace", size: "5 239 kB" },
  { icon: <AppIcon kind="office" />, name: "setupo365proplusretail.x86.cs-cz_o_32_", date: "11.05.2020 22:20", type: "Aplikace", size: "5 472 kB" },
  { icon: <Sheet kind="xls" />, name: "seznam_pzs_1-5-2019", date: "04.06.2019 11:18", type: "List Microsoft Excelu 97", size: "1 469 kB" },
  { icon: <Sheet kind="jpg" />, name: "Výstřižek", date: "29.09.2019 23:44", type: "Soubor JPG", size: "21 kB" },
  { icon: <Sheet kind="png" />, name: "Výstřižek", date: "29.09.2019 23:44", type: "Soubor PNG", size: "5 kB" },
];

const BLUE = "#76b9ed";
const tasks = [
  { id: "view", label: "Zobrazení úkolů" },
  { id: "edge", label: "Edge" },
  { id: "explorer", label: "Průzkumník", bg: "#4a4a4a", line: BLUE },
  { id: "chrome", label: "Chrome", line: BLUE },
  { id: "scanner", label: "Skener", line: BLUE },
  { id: "mail", label: "Pošta" },
  { id: "gift", label: "Dárky" },
  { id: "store", label: "Store" },
  { id: "sims", label: "Sims" },
  { id: "sticky", label: "Rychlé poznámky", bg: "#a75d24", line: "#ff7a0c" },
  { id: "gear", label: "Nastavení", line: BLUE },
  { id: "display", label: "Systém", line: BLUE },
  { id: "panel", label: "Ovládací panely", line: BLUE },
  { id: "paint", label: "Malování", line: BLUE },
];

/* ---------- sections ---------- */

function RibbonBar() {
  return (
    <Ribbon>
      <Group $w={360}>
        <GroupBody>
          <BigButton w={116} icon={<Pin />} lines={["Připnout k", "Rychlému přístupu"]} />
          <BigButton w={58} icon={<CopyBig />} lines={["Kopírovat"]} disabled />
          <BigButton w={54} icon={<PasteBig />} lines={["Vložit"]} disabled />
          <SmallList $pad={3}>
            <SmallButton icon={<Scissors />} text="Vyjmout" disabled />
            <SmallButton icon={<PathIcon />} text="Kopírovat cestu" disabled />
            <SmallButton icon={<ShortcutIcon />} text="Vložit zástupce" disabled />
          </SmallList>
        </GroupBody>
        <GroupLabel>Schránka</GroupLabel>
      </Group>
      <Group $w={281}>
        <GroupBody>
          <BigButton w={62} icon={<MoveBig />} lines={["Přesunout", "do"]} caret disabled />
          <BigButton w={62} icon={<CopyToBig />} lines={["Kopírovat", "do"]} caret disabled />
          <InnerSep />
          <BigButton w={60} icon={<DeleteBig />} lines={["Odstranit", ""]} caret />
          <BigButton w={76} icon={<RenameBig />} lines={["Přejmenovat"]} disabled />
        </GroupBody>
        <GroupLabel>Uspořádat</GroupLabel>
      </Group>
      <Group $w={190}>
        <GroupBody>
          <BigButton w={48} icon={<Folder w={28} h={36} />} lines={["Nová", "složka"]} />
          <SmallList $pad={6}>
            <SmallButton icon={<NewItem />} text="Nová položka" caret />
            <SmallButton icon={<EasyAccess />} text="Snadný přístup" caret />
          </SmallList>
        </GroupBody>
        <GroupLabel>Nové</GroupLabel>
      </Group>
      <Group $w={154}>
        <GroupBody $pad={2}>
          <BigButton w={64} icon={<CheckDoc w={28} h={36} />} lines={["Vlastnosti", ""]} caret />
          <SmallList $pad={5}>
            <SmallButton icon={<OpenIcon />} text="Otevřít" caret disabled h={27} />
            <SmallButton icon={<EditIcon />} text="Upravit" disabled h={27} />
            <SmallButton icon={<HistoryIcon />} text="Historie" h={27} />
          </SmallList>
        </GroupBody>
        <GroupLabel>Otevřít</GroupLabel>
      </Group>
      <Group $w={135}>
        <GroupBody>
          <SmallList $pad={4}>
            <SmallButton icon={<GridIcon on={[1, 1, 1, 1]} />} text="Vybrat vše" />
            <SmallButton icon={<GridIcon on={[0, 0, 0, 0]} />} text="Zrušit výběr" />
            <SmallButton icon={<GridIcon on={[0, 1, 1, 0]} />} text="Invertovat výběr" />
          </SmallList>
        </GroupBody>
        <GroupLabel>Vybrat</GroupLabel>
      </Group>
    </Ribbon>
  );
}

function FileTable() {
  return (
    <Files>
      <thead>
        <tr>
          <Th $w={341}>
            <HeadCell $pad={22}>
              Název
              <SortMark><Chevron dir="up" size={10} color="#777" sw={1} /></SortMark>
            </HeadCell>
          </Th>
          <Th $w={180}><HeadCell>Datum změny</HeadCell></Th>
          <Th $w={150}><HeadCell>Typ</HeadCell></Th>
          <Th $w={100}><HeadCell>Velikost</HeadCell></Th>
        </tr>
      </thead>
      <tbody>
        {files.map((f, i) => (
          <tr key={i}>
            <Td><NameCell>{f.icon}{f.name}</NameCell></Td>
            <Td>{f.date}</Td>
            <Td>{f.type}</Td>
            <Td $right>{f.size}</Td>
          </tr>
        ))}
      </tbody>
    </Files>
  );
}

function Properties() {
  const ref = useRef(null);
  useEffect(() => {
    ref.current.focus();
    ref.current.select();
  }, []);
  return (
    <Dialog onSubmit={(e) => e.preventDefault()}>
      <DialogTitle>
        <FolderMusic />
        D:\ – vlastnosti
        <DialogClose type="button" aria-label="Zavřít">
          <Svg w={14} h={14}><path d="M1 1l12 12M13 1L1 13" stroke="#111" strokeWidth="1.300" /></Svg>
        </DialogClose>
      </DialogTitle>
      <DialogTabs $back>
        <DialogTab type="button" $w={104}>Umístění</DialogTab>
        <DialogTab type="button" $w={149}>Předchozí verze</DialogTab>
        <DialogTab type="button" $w={88}>Kvóta</DialogTab>
        <DialogTab type="button" $w={116}>Přizpůsobit</DialogTab>
      </DialogTabs>
      <DialogTabs>
        <DialogTab type="button" $w={90} $on>Obecné</DialogTab>
        <DialogTab type="button" $w={85}>Nástroje</DialogTab>
        <DialogTab type="button" $w={95}>Hardware</DialogTab>
        <DialogTab type="button" $w={77}>Sdílení</DialogTab>
        <DialogTab type="button" $w={113}>Zabezpečení</DialogTab>
      </DialogTabs>
      <Panel>
        <VolumeRow>
          <DriveBox><BigDrive /></DriveBox>
          <VolumeInput ref={ref} aria-label="Název jednotky" defaultValue="DATA" />
        </VolumeRow>
        <Rule />
        <Facts $pad="12px 0 9px 1px">
          <Fact><Term $w={119}>Typ:</Term><Value>Místní disk</Value></Fact>
          <Fact><Term $w={127}>Systém souborů:</Term><Value>NTFS</Value></Fact>
        </Facts>
        <Rule />
        <Facts $pad="10px 0 13px 0">
          <Fact><Swatch $c="#26a0da" /><Term $w={120}>Využité místo:</Term><Value $w={146} $right>230 455 525 376 bajtů</Value><Value $w={84} $right>214 GB</Value></Fact>
          <Fact><Swatch $c="#ababab" /><Term $w={120}>Volné místo:</Term><Value $w={146} $right>769 747 562 496 bajtů</Value><Value $w={84} $right>716 GB</Value></Fact>
        </Facts>
        <Rule />
        <Facts $pad="12px 0 0 28px">
          <Fact><Term $w={120}>Kapacita:</Term><Value $w={146} $right>1 000 203 087 872 bajtů</Value><Value $w={84} $right>931 GB</Value></Fact>
        </Facts>
        <ChartArea>
          <Donut>
            <Svg w={70} h={70}>
              <circle cx="35" cy="35" r="28" stroke="#ababab" strokeWidth="13" />
              <path d="M7 35A28 28 0 0132 7.200" stroke="#26a0da" strokeWidth="13" />
            </Svg>
            <figcaption>Jednotka D:</figcaption>
          </Donut>
          <CleanUp><PushButton type="button" $w={106}>Vyčištění disku</PushButton></CleanUp>
        </ChartArea>
        <Rule />
        <Options>
          <Option><Tick type="checkbox" />Komprimovat jednotku a šetřit tak místo na disku</Option>
          <Option><Tick type="checkbox" defaultChecked /><span>U souborů na této jednotce indexovat kromě vlastností souboru<br />také obsah</span></Option>
        </Options>
      </Panel>
      <DialogFooter>
        <PushButton $w={98} $primary>OK</PushButton>
        <PushButton type="button" $w={98}>Zrušit</PushButton>
        <PushButton type="button" $w={98} disabled>Použít</PushButton>
      </DialogFooter>
    </Dialog>
  );
}

function Bottom() {
  return (
    <TaskBar>
      <Start aria-label="Start">
        <Svg w={20} h={20}><path d="M0 3l8.500-1.200v7.700H0zM9.500 1.600L20 0v9.500H9.500zM0 10.500h8.500v7.700L0 17zM9.500 10.500H20V20L9.500 18.400z" fill="#fff" /></Svg>
      </Start>
      <TaskSearch>
        <Magnifier w={22} color="#222" sw={1} />
        <SearchInput $ink="#333" aria-label="Hledat" placeholder="Sem zadejte hledaný výraz" />
      </TaskSearch>
      <Tasks>
        {tasks.map((t) => (
          <Task key={t.id} aria-label={t.label} $bg={t.bg} $line={t.line}>{taskIcons[t.id]}</Task>
        ))}
      </Tasks>
      <Tray>
        <TrayButton aria-label="Skryté ikony"><Svg w={18} h={10}><path d="M1 9l8-8 8 8" stroke="#fff" strokeWidth="1.400" /></Svg></TrayButton>
        <TrayButton aria-label="Dropbox">
          <Svg w={18} h={16}><path d="M4.500 0L9 3 4.500 6 0 3zM13.500 0L18 3l-4.500 3L9 3zM4.500 6L9 9l-4.500 3L0 9zM13.500 6L18 9l-4.500 3L9 9zM9 10l4 3-4 3-4-3z" fill="#a0a0a0" /></Svg>
        </TrayButton>
        <TrayButton aria-label="Hlasitost">
          <Svg w={20} h={16}>
            <path d="M1 5.500h3l4-4v13l-4-4H1z" stroke="#fff" strokeWidth="1.200" />
            <path d="M11 5.500c1.300 1.500 1.300 3.500 0 5M13.500 3.500c2.300 2.500 2.300 6.500 0 9" stroke="#fff" strokeWidth="1.200" />
            <path d="M16 1.500c3.500 4 3.500 9 0 13" stroke="#777" strokeWidth="1.200" />
          </Svg>
        </TrayButton>
        <TrayButton aria-label="Baterie">
          <Svg w={20} h={14}><path d="M5.500 3.500H18v9H5.500zM18 6.500h1.500v3H18z" stroke="#fff" /><path d="M7 5h9.500v6H7zM0 3h5v3L4 8H2L0 6zM1 0h1v3H1zM3.500 0h1v3h-1z" fill="#fff" /></Svg>
        </TrayButton>
        <TrayButton aria-label="Síť">
          <Svg w={16} h={16}>
            <path d="M1 15C1 7 7 1 15 1M4.500 15C4.500 9 9 4.500 15 4.500M8 15c0-4 3-7 7-7" stroke="#bbb" strokeWidth="1.300" />
            <path d="M11 15a4 4 0 014-4" stroke="#fff" strokeWidth="1.300" /><circle cx="14" cy="14" r="1.500" fill="#fff" />
          </Svg>
        </TrayButton>
        <Language>CES</Language>
        <Clock>21:23<br />16.05.2020</Clock>
        <Notices aria-label="Oznámení">
          <Svg w={20} h={20}><path d="M0 0h20v15h-6v5l-5-5H0z" fill="#fff" /><path d="M4 4.500h12M4 7.500h12M4 10.500h8" stroke="#222" /></Svg>
          <Count>2</Count>
        </Notices>
      </Tray>
    </TaskBar>
  );
}

export default function App() {
  return (
    <Screen>
      <Global />
      <TitleBar>
        <QuickAccess>
          <Note />
          <QuickSep />
          <QuickButton aria-label="Vlastnosti"><CheckDoc /></QuickButton>
          <QuickButton aria-label="Nová složka"><Folder /></QuickButton>
          <QuickButton aria-label="Přizpůsobit panel">
            <Svg w={10} h={8}><path d="M1 1h8" stroke="#222" strokeWidth="1.400" /><path d="M1.500 4h7L5 7.500z" fill="#222" /></Svg>
          </QuickButton>
          <QuickSep />
        </QuickAccess>
        <ContextTitle>Spravovat</ContextTitle>
        <WindowTitle>Hudba</WindowTitle>
        <Controls>
          <Control aria-label="Minimalizovat"><Svg w={12} h={12}><path d="M0 5.500h12" stroke="#999" /></Svg></Control>
          <Control aria-label="Obnovit"><Svg w={13} h={13}><path d="M.5 2.500h9v9h-9zM2.500 2.500v-2h9v9h-2" stroke="#999" /></Svg></Control>
          <Control aria-label="Zavřít"><Svg w={12} h={12}><path d="M0 0l12 12M12 0L0 12" stroke="#999" /></Svg></Control>
        </Controls>
      </TitleBar>
      <TabRow>
        <Tab $w={70} $kind="file">Soubor</Tab>
        <Tab $w={69} $kind="active">Domů</Tab>
        <Tab $w={74}>Sdílení</Tab>
        <Tab $w={92}>Zobrazení</Tab>
        <Tab $w={163} $kind="context">Nástroje pro jednotky</Tab>
        <TabTail>
          <Chevron dir="up" size={14} color="#999" sw={1} />
          <Help aria-label="Nápověda">?</Help>
        </TabTail>
      </TabRow>
      <RibbonBar />
      <AddressRow>
        <NavButtons>
          <NavButton $w={38} aria-label="Zpět"><Arrow dir="left" /></NavButton>
          <NavButton $w={34} aria-label="Vpřed"><Arrow dir="right" color="#d5d5d5" /></NavButton>
          <NavButton $w={22} aria-label="Poslední umístění"><Chevron dir="down" /></NavButton>
          <NavButton $w={20} aria-label="Nahoru"><Arrow dir="up" /></NavButton>
        </NavButtons>
        <AddressBox>
          <Note />
          <Chevron sw={1.5} />
          <Crumb href="#pc">Tento počítač</Crumb>
          <Chevron sw={1.5} />
          <Crumb href="#hudba">Hudba</Crumb>
          <AddressTail>
            <AddressButton aria-label="Předchozí umístění"><Chevron dir="down" size={12} color="#666" /></AddressButton>
            <AddressButton $line aria-label="Aktualizovat"><Refresh /></AddressButton>
          </AddressTail>
        </AddressBox>
        <SearchBox>
          <SearchInput aria-label="Prohledat" placeholder="Prohledat: Hudba" />
          <Magnifier w={14} />
        </SearchBox>
      </AddressRow>
      <EpsonBar>
        <EpsonMark>EPSON</EpsonMark>
        <BarButton $gap={8}>
          Easy Photo Print
          <Svg w={10} h={6}><path d="M0 0h10L5 6z" fill="#111" /></Svg>
        </BarButton>
        <BarButton $gap={4}><PrintBadge />Tisk fotografie</BarButton>
      </EpsonBar>
      <Panes>
        <TreeList>
          {tree.map((n, i) => (
            <TreeItem key={i} $level={n.level} $selected={n.selected}>
              <Slot $w={22}>
                {n.open && <Chevron dir="down" size={12} color="#444" />}
                {n.more && <Chevron size={12} color="#a0a0a0" sw={1.5} />}
              </Slot>
              <Slot $w={20} $justify="center">{n.icon || <Folder />}</Slot>
              <Slot $w={5} />
              {n.name}
            </TreeItem>
          ))}
        </TreeList>
        <ScrollBar>
          <ScrollButton aria-label="Nahoru"><Chevron dir="up" size={12} color="#555" /></ScrollButton>
          <Track><TrackGap /><Thumb /></Track>
          <ScrollButton aria-label="Dolů"><Chevron dir="down" size={12} color="#555" /></ScrollButton>
        </ScrollBar>
        <FilePane><FileTable /></FilePane>
      </Panes>
      <StatusBar>
        Počet položek: 25
        <Views>
          <ViewButton $on aria-label="Podrobnosti">
            <Svg w={20} h={16}><path d="M.5.500h5v5h-5zM.5 5.500h5v5h-5zM.5 10.500h5v5h-5z" fill="#fff" stroke="#888" /><path d="M2 3h2M2 8h2M2 13h2" stroke="#444" strokeWidth="2" /><path d="M8 3h5M14 3h5M8 8h5M14 8h5M8 13h5M14 13h5" stroke="#666" /></Svg>
          </ViewButton>
          <ViewButton aria-label="Velké ikony"><Picture /></ViewButton>
        </Views>
      </StatusBar>
      <Properties />
      <Bottom />
    </Screen>
  );
}
